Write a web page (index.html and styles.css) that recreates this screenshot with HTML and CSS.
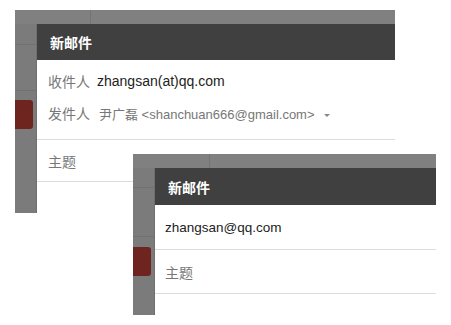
FILE: index.html
```html
<!DOCTYPE html>
<html lang="zh-CN">
<head>
  <meta charset="UTF-8">
  <title>新邮件</title>
  <link rel="stylesheet" href="styles.css">
</head>
<body>

  <!-- shot 1: compose with sender row -->
  <div class="shot shot-one">
    <div class="topbar"><div class="topbar-cell"></div></div>
    <div class="shot-body">
      <div class="side">
        <div class="side-cell side-a"></div>
        <div class="side-cell side-b"></div>
        <div class="side-btn"></div>
      </div>
      <div class="panel">
        <div class="panel-head">新邮件</div>
        <div class="row row-to">
          <span class="label">收件人</span>
          <span class="value">zhangsan(at)qq.com</span>
        </div>
        <div class="row row-from">
          <span class="label">发件人</span>
          <span class="from">尹广磊 &lt;shanchuan666@gmail.com&gt;</span>
          <span class="caret"></span>
        </div>
        <div class="row row-subject">
          <span class="label">主题</span>
        </div>
      </div>
    </div>
  </div>

  <!-- shot 2: compose, plain address -->
  <div class="shot shot-two">
    <div class="topbar"><div class="topbar-cell"></div></div>
    <div class="shot-body">
      <div class="side">
        <div class="side-cell side-a"></div>
        <div class="side-cell side-b"></div>
        <div class="side-btn"></div>
      </div>
      <div class="panel">
        <div class="panel-head">新邮件</div>
        <div class="row row-line">
          <span class="value">zhangsan@qq.com</span>
        </div>
        <div class="row row-line">
          <span class="label">主题</span>
        </div>
      </div>
    </div>
  </div>

</body>
</html>
```

FILE: styles.css
```css
body {
  margin: 0;
  background: #fff;
  font-family: "Liberation Sans", "Noto Sans CJK SC", sans-serif;
  width: 451px;
  height: 325px;
  position: relative;
  overflow: hidden;
}

/* each screenshot sits on the canvas where it was pasted */
.shot {
  position: absolute;
  background: #7b7b7b;
  display: flex;
  flex-direction: column;
  overflow: hidden;
}
.shot-one { left: 15px; top: 10px; width: 380px; height: 203px; }
.shot-two { left: 133px; top: 154px; width: 303px; height: 161px; }

.topbar {
  height: 14px;
  background: #808080;
  flex: none;
}
.topbar-cell {
  width: 75px;
  height: 100%;
  border-right: 1px solid #747474;
}
.shot-two .topbar-cell { width: 76px; }

.shot-body {
  flex: 1;
  display: flex;
  min-height: 0;
}

.side {
  width: 22px;
  flex: none;
  background: #7b7b7b;
}
.side-cell { border-bottom: 1px solid #717171; }
.side-a { height: 20px; }
.side-b { height: 45px; }
.side-btn {
  margin-top: 9px;
  width: 18px;
  height: 29px;
  background: #6e2520;
  border-radius: 0 3px 3px 0;
}
.shot-two .side-a { height: 19px; }
.shot-two .side-b { height: 48px; }
.shot-two .side-btn { margin-top: 10px; }

.panel {
  flex: 1;
  background: #fff;
  box-shadow: -1px 0 0 #6f6f6f;
}

.panel-head {
  height: 36px;
  background: #404040;
  color: #fff;
  font-size: 14px;
  font-weight: bold;
  display: flex;
  align-items: center;
  padding-left: 13px;
}
.shot-two .panel-head { height: 37px; }

.row {
  display: flex;
  align-items: center;
  padding-left: 11px;
  font-size: 14px;
  box-sizing: border-box;
}
.label {
  color: #777;
  font-size: 14px;
  margin-right: 7px;
}
.value { color: #222; }

.row-to { height: 37px; padding-top: 4px; }
.row-from { height: 43px; border-bottom: 1px solid #ddd; padding-bottom: 10px; }
.row-subject { height: 42px; border-bottom: 1px solid #ddd; }

.from {
  color: #777;
  font-size: 13px;
  margin-left: 2px;
}
.caret {
  width: 0;
  height: 0;
  margin-left: 9px;
  margin-top: 4px;
  border-left: 3px solid transparent;
  border-right: 3px solid transparent;
  border-top: 3px solid #888;
}

.shot-two .row { padding-left: 10px; }
.row-line {
  height: 45px;
  border-bottom: 1px solid #ddd;
}
.row-line + .row-line { height: 44px; }
.row-line .value { font-size: 13.5px; }
```
